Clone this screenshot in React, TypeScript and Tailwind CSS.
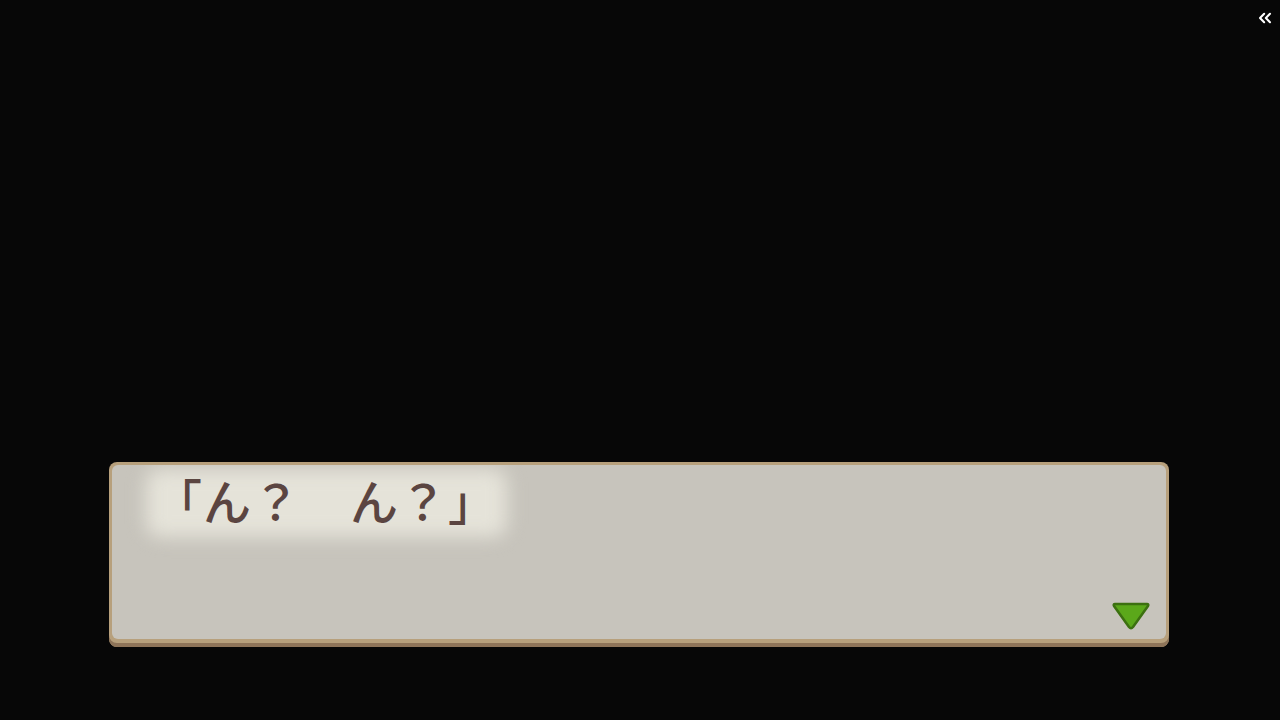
import React from "react";
import { ChevronsLeft } from "lucide-react";

export default function App() {
  return (
    <div className="relative h-[720px] w-[1280px] bg-[#070707] flex flex-col justify-end pl-[109px] pr-[111px] pb-[73px] overflow-hidden">
      <button className="absolute top-[8px] right-[5px] text-white">
        <ChevronsLeft size={20} strokeWidth={2.5} />
      </button>
      <div className="h-[185px] rounded-[8px] bg-[#b7a07c] pt-[3px] px-[3px] pb-[8px] shadow-[inset_0_-4px_0_#8e7459]">
        <div className="relative h-full overflow-hidden rounded-[6px] bg-[#c7c4bc] pl-[42px] pt-[10px]">
          <div className="relative inline-block">
            <div className="absolute top-[-6px] bottom-[-14px] left-[-8px] right-[-10px] rounded-[14px] bg-[#e5e3d9] blur-[9px]" />
            <span
              className="relative block text-[48px] font-medium leading-none tracking-[1px] text-[#5b4541]"
              style={{ fontFamily: '"Noto Sans CJK JP", "Noto Sans", sans-serif' }}
            >
              「ん？　ん？」
            </span>
          </div>
          <svg
            className="absolute right-[15px] bottom-[8px]"
            width="40"
            height="30"
            viewBox="0 0 40 30"
          >
            <path
              d="M4 3 L36 3 Q38 3 37 5 L22 26 Q20 28.5 18 26 L3 5 Q2 3 4 3 Z"
              fill="#5ba81a"
              stroke="#3c7010"
              strokeWidth="2.5"
              strokeLinejoin="round"
            />
          </svg>
        </div>
      </div>
    </div>
  );
}
